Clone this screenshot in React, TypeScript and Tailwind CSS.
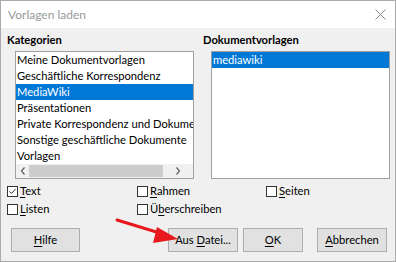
import React from 'react';

const kategorien = [
  'Meine Dokumentvorlagen',
  'Geschäftliche Korrespondenz',
  'MediaWiki',
  'Präsentationen',
  'Private Korrespondenz und Dokumente',
  'Sonstige geschäftliche Dokumente',
  'Vorlagen',
];

function Mn({ text, idx }: { text: string; idx: number }) {
  return (
    <>
      {text.slice(0, idx)}
      <span className="underline underline-offset-[1.5px]">{text[idx]}</span>
      {text.slice(idx + 1)}
    </>
  );
}

function CheckBox({ label, idx, checked }: { label: string; idx: number; checked?: boolean }) {
  return (
    <div className="flex items-center h-[18px]">
      <div className="w-[11px] h-[11px] border border-[#333] bg-white flex items-center justify-center">
        {checked && (
          <svg width="9" height="9" viewBox="0 0 9 9">
            <path d="M1.5 4.5 L3.5 6.5 L7.5 2" fill="none" stroke="#333" strokeWidth="1" />
          </svg>
        )}
      </div>
      <span className="ml-[2px]">
        <Mn text={label} idx={idx} />
      </span>
    </div>
  );
}

function Btn({ label, idx, w }: { label: string; idx: number; w: string }) {
  return (
    <div className={`${w} h-[24px] bg-[#e1e1e1] border border-[#adadad] flex items-center justify-center`}>
      <span>
        <Mn text={label} idx={idx} />
      </span>
    </div>
  );
}

export default function App() {
  return (
    <div
      className="relative w-[396px] h-[262px] border border-[#aaaaaa] flex flex-col text-[11.2px] text-black bg-[#f0f0f0]"
      style={{ fontFamily: 'Lato, sans-serif' }}
    >
      {/* Title bar */}
      <div className="h-[27px] bg-white flex items-center justify-between pl-[7px] pr-[9px]">
        <span className="text-[#999] text-[12px]">Vorlagen laden</span>
        <svg width="11" height="11" viewBox="0 0 11 11">
          <path d="M0.5 0.5 L10.5 10.5 M10.5 0.5 L0.5 10.5" stroke="#888" strokeWidth="1" />
        </svg>
      </div>

      {/* Lists */}
      <div className="flex mt-[4px]">
        <div className="w-[196px] pl-[6px]">
          <div className="font-bold h-[16px] leading-[16px]">Kategorien</div>
          <div className="mt-[3px] ml-[8px] w-[179px] h-[128px] border border-[#a0a0a0] bg-white flex flex-col">
            <div className="h-[112px] overflow-hidden">
              {kategorien.map((k) => (
                <div
                  key={k}
                  className={`h-[16px] leading-[16px] pl-[1px] whitespace-nowrap ${k === 'MediaWiki' ? 'bg-[#0078d7] text-white' : ''}`}
                >
                  {k}
                </div>
              ))}
            </div>
            <div className="flex-1 bg-[#f0f0f0] flex items-center">
              <div className="w-[13px] flex justify-center">
                <svg width="6" height="8" viewBox="0 0 6 8">
                  <path d="M4.5 0.5 L1.5 4 L4.5 7.5" fill="none" stroke="#606060" strokeWidth="1.2" />
                </svg>
              </div>
              <div className="w-[134px] h-[12px] bg-[#cdcdcd]" />
              <div className="flex-1 flex justify-center">
                <svg width="6" height="8" viewBox="0 0 6 8">
                  <path d="M1.5 0.5 L4.5 4 L1.5 7.5" fill="none" stroke="#606060" strokeWidth="1.2" />
                </svg>
              </div>
            </div>
          </div>
        </div>
        <div className="pl-[6px]">
          <div className="font-bold h-[16px] leading-[16px]">Dokumentvorlagen</div>
          <div className="mt-[3px] ml-[8px] w-[179px] h-[128px] border border-[#a0a0a0] bg-white">
            <div className="h-[16px] leading-[16px] pl-[1px] bg-[#0078d7] text-white">mediawiki</div>
          </div>
        </div>
      </div>

      {/* Checkboxes */}
      <div className="flex mt-[3px] pl-[6px]">
        <div className="w-[130px]">
          <CheckBox label="Text" idx={0} checked />
          <CheckBox label="Listen" idx={0} />
        </div>
        <div className="w-[129px]">
          <CheckBox label="Rahmen" idx={0} />
          <CheckBox label="Überschreiben" idx={1} />
        </div>
        <div>
          <CheckBox label="Seiten" idx={0} />
        </div>
      </div>

      {/* Buttons */}
      <div className="flex mt-[10px] pl-[10px]">
        <Btn label="Hilfe" idx={0} w="w-[69px]" />
        <div className="ml-[88px]">
          <Btn label="Aus Datei..." idx={4} w="w-[70px]" />
        </div>
        <div className="ml-[5px]">
          <Btn label="OK" idx={0} w="w-[60px]" />
        </div>
        <div className="ml-[14px]">
          <Btn label="Abbrechen" idx={0} w="w-[70px]" />
        </div>
      </div>

      {/* Red annotation arrow */}
      <svg className="absolute left-0 top-0" width="396" height="262" viewBox="0 0 396 262">
        <line x1="116" y1="219" x2="162" y2="233" stroke="#e8191e" strokeWidth="3" strokeLinecap="round" />
        <polygon points="177,238 156,226 152,242" fill="#e8191e" />
      </svg>
    </div>
  );
}
